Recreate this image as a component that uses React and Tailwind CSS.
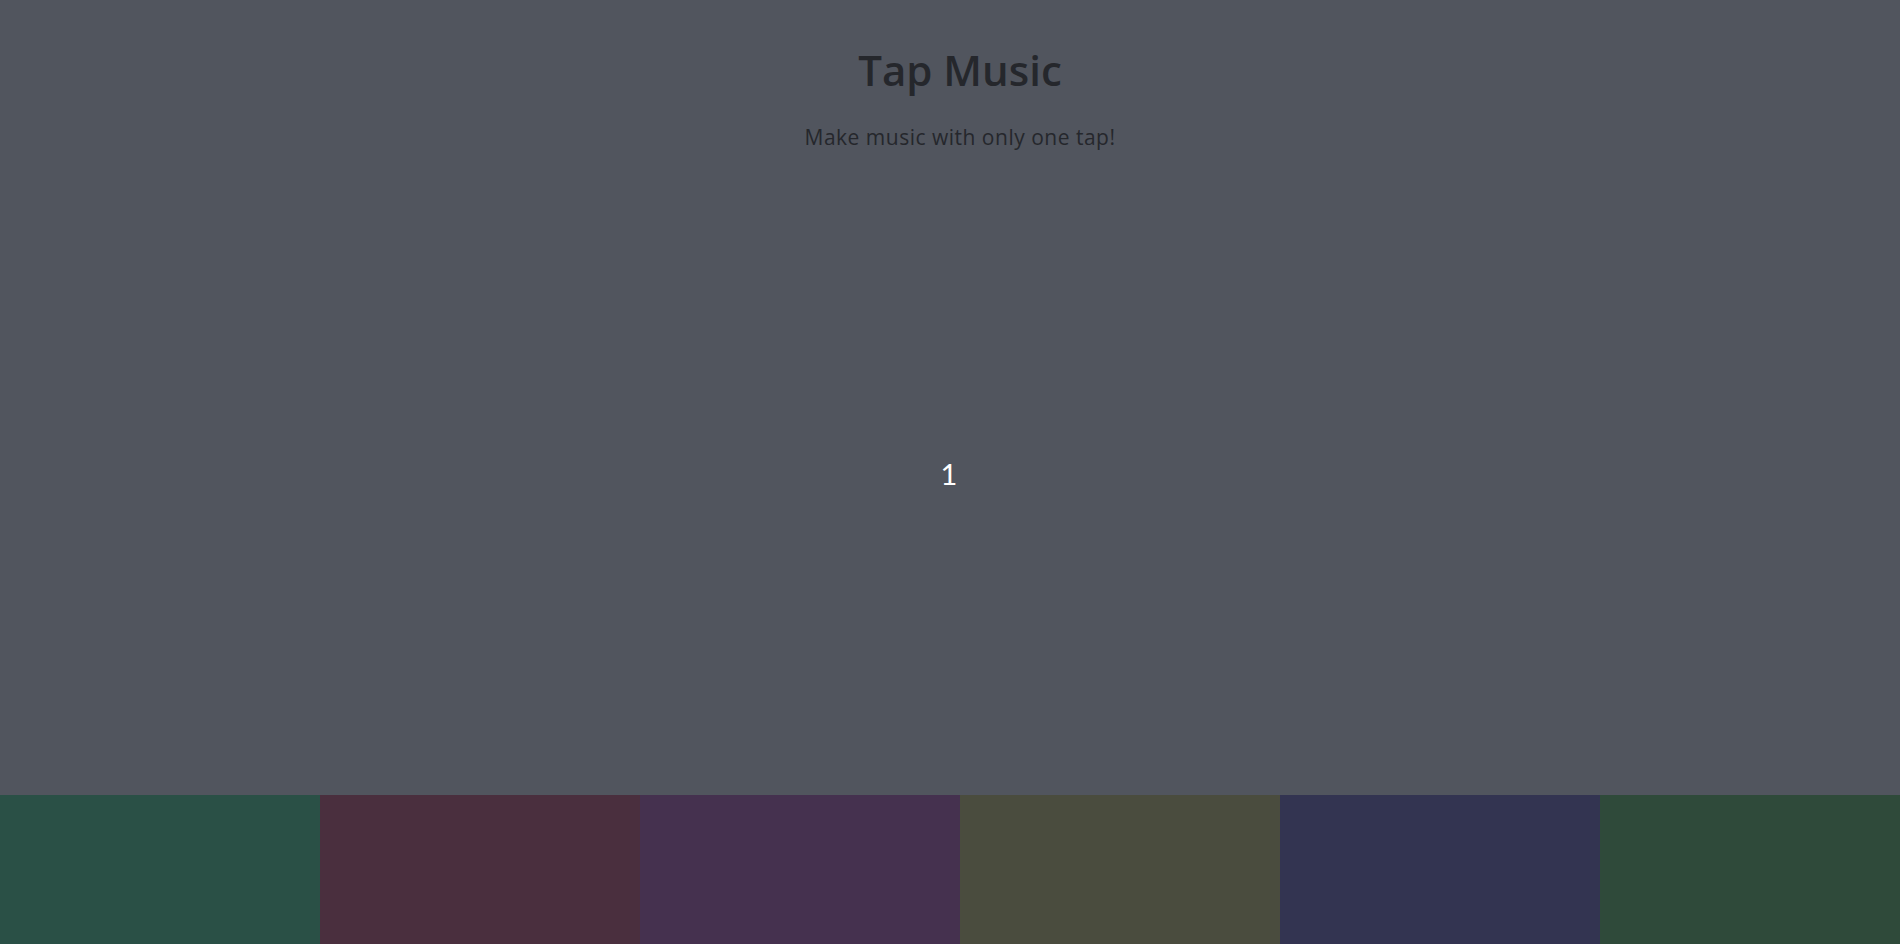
import React from "react";

const pads = [
  "bg-[#2a5046]",
  "bg-[#4a2f3e]",
  "bg-[#45314f]",
  "bg-[#4a4c3e]",
  "bg-[#333451]",
  "bg-[#2f4a3a]",
];

const App = () => {
  return (
    <div className="w-full h-[944px] overflow-hidden bg-[#51555e] flex flex-col" style={{ fontFamily: "'Open Sans', sans-serif" }}>
      <header className="w-[1920px] text-center text-[#25272c] pt-[40px]">
        <h1 className="text-[42px] font-semibold leading-[60px]">Tap Music</h1>
        <p className="text-[21px] mt-[23px] leading-[28px] tracking-[0.5px]">Make music with only one tap!</p>
      </header>
      <main className="flex-1 flex items-center justify-center">
        <span className="text-white text-[29px] pr-[2px] pt-[1px]" style={{ fontFamily: "Lato, sans-serif" }}>1</span>
      </main>
      <div className="flex h-[149px] w-[1920px] shrink-0">
        {pads.map((c) => (
          <div key={c} className={`${c} w-[320px] h-full`} />
        ))}
      </div>
    </div>
  );
};

export default App;
